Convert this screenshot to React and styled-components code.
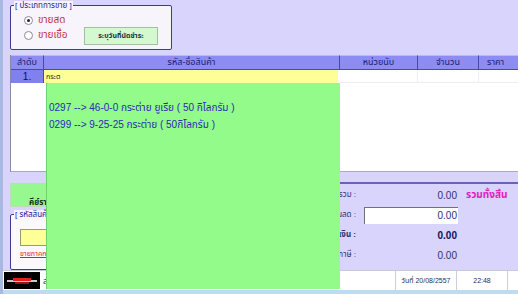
import React from "react";
import styled, { createGlobalStyle } from "styled-components";

const FONT = `"Liberation Sans", Tahoma, "Noto Sans Thai", "Noto Sans", sans-serif`;

const Global = createGlobalStyle`
  html, body { margin: 0; padding: 0; background: #d8d4fc; overflow: hidden; }
  body { font-family: ${FONT}; }
`;

const Screen = styled.div`
  position: relative;
  width: 518px;
  height: 294px;
  overflow: hidden;
  background: #d8d4fc;
  display: flex;
  flex-direction: column;
  border-left: 3px solid #a8b8e0;
  box-sizing: border-box;
`;

const Body = styled.div`
  flex: 1;
  display: flex;
  flex-direction: column;
  padding-left: 7px;
`;

const TopArea = styled.div`
  height: 55px;
  padding-top: 5px;
  box-sizing: border-box;
`;

const GroupBox = styled.div`
  width: ${(p) => p.$w}px;
  height: ${(p) => p.$h}px;
  box-sizing: border-box;
  border: 1px solid #3a3a98;
  border-radius: 2px;
  background: #f8f4fc;
  position: relative;
`;

const Legend = styled.span`
  position: absolute;
  left: 3px;
  top: -5px;
  font-size: 8px;
  line-height: 10px;
  color: #2424a0;
  background: #f8f4fc;
  padding: 0 1px;
`;

const SaleType = styled.div`
  display: grid;
  grid-template-columns: 58px auto;
  grid-template-rows: 16px 18px;
  padding: 6px 0 0 13px;
  align-items: center;
`;

const Radio = styled.label`
  display: flex;
  align-items: center;
  gap: 5px;
  font-size: 10px;
  line-height: 14px;
  height: 14px;
  color: #c03040;
  align-self: ${(p) => p.$self || "center"};
`;

const Dot = styled.span`
  width: 7px;
  height: 7px;
  border-radius: 50%;
  border: 1px solid #8a8a9a;
  background: #fff;
  position: relative;
  &::after {
    content: "";
    display: ${(p) => (p.$on ? "block" : "none")};
    position: absolute;
    left: 2px;
    top: 2px;
    width: 3px;
    height: 3px;
    border-radius: 50%;
    background: #222;
  }
`;

const DueButton = styled.button`
  grid-column: 2;
  grid-row: 2;
  width: 74px;
  height: 18px;
  margin-left: 2px;
  margin-top: -2px;
  border: 1px solid #a0c0a0;
  background: #d4f8d0;
  font-family: ${FONT};
  font-size: 7px;
  font-weight: bold;
  color: #203040;
  padding: 0;
`;

const Table = styled.div`
  width: 508px;
  height: 117px;
  background: #fff;
  border-left: 1px solid #8888a8;
  border-bottom: 1px solid #a8a8c0;
  box-sizing: border-box;
  display: flex;
  flex-direction: column;
  overflow: hidden;
`;

const COLS = "33px 296px 78px 61px 60px";

const HeadRow = styled.div`
  display: grid;
  grid-template-columns: ${COLS};
  height: 15px;
  background: #d8d4fc;
`;

const HeadCell = styled.div`
  background: #8c8cf2;
  border-top: 1px solid #b8b8ff;
  border-right: 1px solid #4a4aa0;
  border-bottom: 1px solid #4a4aa0;
  box-sizing: border-box;
  font-size: 9px;
  line-height: 13px;
  color: #1c1c70;
  text-align: ${(p) => p.$align || "center"};
  padding-left: ${(p) => p.$pl || 0}px;
  white-space: nowrap;
  overflow: hidden;
`;

const DataRow = styled.div`
  display: grid;
  grid-template-columns: ${COLS};
  height: 13px;
`;

const NumCell = styled.div`
  background: #8080ee;
  border-right: 1px solid #4a4aa0;
  box-sizing: border-box;
  font-size: 10px;
  line-height: 13px;
  color: #101050;
  text-align: center;
`;

const EditCell = styled.div`
  background: #ffff98;
  margin-right: 2px;
  font-size: 7px;
  line-height: 13px;
  color: #202020;
  padding-left: 2px;
`;

const PlainCell = styled.div`
  border-right: 1px solid #ececf4;
  border-bottom: 1px solid #ececf4;
  box-sizing: border-box;
`;

const Gap = styled.div`
  height: 10px;
`;

const Lower = styled.div`
  flex: 1;
  display: flex;
`;

const LeftCol = styled.div`
  width: 290px;
  display: flex;
  flex-direction: column;
`;

const GreenKey = styled.div`
  width: 50px;
  height: 24px;
  margin-top: 1px;
  background: #98f890;
  border: 1px solid #c0d8c0;
  box-sizing: border-box;
  font-size: 8px;
  font-weight: bold;
  color: #103010;
  padding: 13px 0 0 18px;
  white-space: nowrap;
`;

const CodeGroup = styled(GroupBox)`
  margin-top: 7px;
  background: #fbf8fe;
`;

const CodeInput = styled.div`
  margin: 14px 0 0 9px;
  width: 60px;
  height: 17px;
  background: #ffff98;
  border: 1px solid #9a9a70;
  box-sizing: border-box;
`;

const RedLink = styled.div`
  margin: 3px 0 0 9px;
  font-size: 7px;
  color: #e02020;
  text-decoration: underline;
  white-space: nowrap;
`;

const Summary = styled.div`
  flex: 1;
  border-top: 2px solid #6a62b8;
  display: grid;
  grid-template-columns: 56px 94px auto;
  grid-auto-rows: 20px;
  column-gap: 8px;
  padding-top: 1px;
  align-items: center;
`;

const SumLabel = styled.div`
  font-size: 8px;
  text-align: right;
  color: #303070;
  font-weight: ${(p) => (p.$bold ? "bold" : "normal")};
  white-space: nowrap;
`;

const SumValue = styled.div`
  font-size: 10px;
  text-align: right;
  color: ${(p) => (p.$bold ? "#101050" : "#303070")};
  font-weight: ${(p) => (p.$bold ? "bold" : "normal")};
  padding-right: 1px;
`;

const SumInput = styled.div`
  height: 17px;
  background: #fff;
  border-top: 1px solid #707080;
  border-left: 1px solid #707080;
  box-sizing: border-box;
  font-size: 10px;
  line-height: 16px;
  text-align: right;
  color: #303070;
  padding-right: 1px;
`;

const Total = styled.div`
  font-size: 10px;
  font-weight: bold;
  color: #e020c0;
  white-space: nowrap;
  margin-top: -1px;
`;

const StatusBar = styled.div`
  height: 20px;
  background: #fff;
  border-top: 1px solid #c8c8d8;
  display: flex;
  align-items: center;
  margin-left: -7px;
  box-sizing: border-box;
`;

const Logo = styled.div`
  width: 36px;
  height: 17px;
  margin-left: 1px;
  background: #000;
  display: flex;
  align-items: center;
  justify-content: center;
`;

const StatusText = styled.div`
  font-size: 9px;
  color: #303030;
  margin-left: 3px;
  flex: 1;
`;

const StatusCell = styled.div`
  width: ${(p) => p.$w}px;
  height: 100%;
  border-left: 1px solid #d0d0d8;
  font-size: 7px;
  line-height: 19px;
  text-align: center;
  color: #303040;
  white-space: nowrap;
`;

const Taskbar = styled.div`
  height: 5px;
  background: #bcdcf4;
  margin-left: -3px;
`;

const Dropdown = styled.div`
  position: absolute;
  left: 43px;
  top: 83px;
  width: 294px;
  height: 206px;
  background: #92fb8a;
  border-left: 1px solid #70d070;
  box-sizing: border-box;
  padding: 16px 0 0 2px;
`;

const Option = styled.div`
  font-size: 10px;
  line-height: 17px;
  height: 17px;
  overflow: hidden;
  color: #2a2ab8;
  white-space: nowrap;
`;

export default function App() {
  return (
    <>
      <Global />
      <Screen>
        <Body>
          <TopArea>
            <GroupBox $w={162} $h={45}>
              <Legend>[ ประเภทการขาย ]</Legend>
              <SaleType>
                <Radio>
                  <Dot $on /> ขายสด
                </Radio>
                <span />
                <Radio $self="start">
                  <Dot /> ขายเชื่อ
                </Radio>
                <DueButton>ระบุวันที่นัดชำระ</DueButton>
              </SaleType>
            </GroupBox>
          </TopArea>
          <Table>
            <HeadRow>
              <HeadCell>ลำดับ</HeadCell>
              <HeadCell>รหัส-ชื่อสินค้า</HeadCell>
              <HeadCell>หน่วยนับ</HeadCell>
              <HeadCell>จำนวน</HeadCell>
              <HeadCell $align="left" $pl={8}>ราคา</HeadCell>
            </HeadRow>
            <DataRow>
              <NumCell>1.</NumCell>
              <EditCell>กระต</EditCell>
              <PlainCell />
              <PlainCell />
              <PlainCell />
            </DataRow>
          </Table>
          <Gap />
          <Lower>
            <LeftCol>
              <GreenKey>คีย์ราคาขาย</GreenKey>
              <CodeGroup $w={150} $h={56}>
                <Legend>[ รหัสสินค้า ]</Legend>
                <CodeInput />
                <RedLink>ขายภาคกลาง</RedLink>
              </CodeGroup>
            </LeftCol>
            <Summary>
              <SumLabel>ยอดรวม :</SumLabel>
              <SumValue>0.00</SumValue>
              <Total>รวมทั้งสิ้น</Total>
              <SumLabel>ส่วนลด :</SumLabel>
              <SumInput>0.00</SumInput>
              <span />
              <SumLabel $bold>ยอดเงิน :</SumLabel>
              <SumValue $bold>0.00</SumValue>
              <span />
              <SumLabel>ภาษี :</SumLabel>
              <SumValue>0.00</SumValue>
              <span />
            </Summary>
          </Lower>
          <StatusBar>
            <Logo>
              <svg width="30" height="8" viewBox="0 0 30 8">
                <rect x="0" y="3" width="30" height="2" fill="#c8c8c8" />
                <rect x="6" y="1" width="18" height="3" fill="#e02020" />
                <rect x="8" y="5" width="14" height="2" fill="#a01010" />
              </svg>
            </Logo>
            <StatusText>ส</StatusText>
            <StatusCell $w={60}>วันที่ 20/08/2557</StatusCell>
            <StatusCell $w={50}>22:48</StatusCell>
            <StatusCell $w={10} />
          </StatusBar>
        </Body>
        <Taskbar />
        <Dropdown>
          <Option>0297 --&gt; 46-0-0 กระต่าย ยูเรีย ( 50 กิโลกรัม )</Option>
          <Option>0299 --&gt; 9-25-25 กระต่าย ( 50กิโลกรัม )</Option>
        </Dropdown>
      </Screen>
    </>
  );
}
